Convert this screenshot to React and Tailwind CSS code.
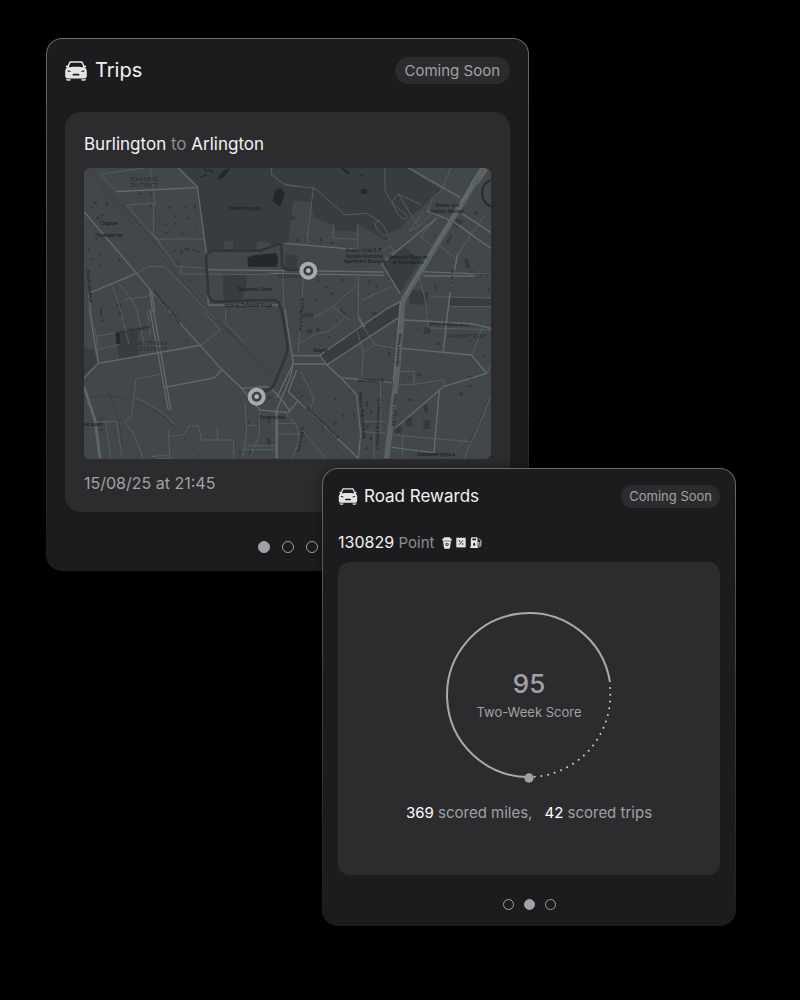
import { useState } from 'react';
import clsx from 'clsx';

// Car seen from the front
const CarIcon = ({ className }) => (
  <svg viewBox="0 0 66 61" className={className} fill="currentColor" aria-hidden="true">
    <path
      fillRule="evenodd"
      d="M18 1h30c4 0 6 2 7 5l3 8c3-1 6 0 6 2 0 3-3 4-4 4 4 3 6 7 6 11v15c0 5-3 7-7 7H7c-4 0-7-2-7-7V31c0-4 2-8 6-11-1 0-4-1-4-4 0-2 3-3 6-2l3-8c1-3 3-5 7-5Zm1 4c-2 0-3 1-4 3l-3 8c-1 2 0 3 2 3 13-2 25-2 38 0 2 0 3-1 2-3l-3-8c-1-2-2-3-4-3H19ZM8 28c-1 0-1 1-1 2 0 2 2 3 4 3h5c2 0 3-1 1-2-3-1-6-2-9-3Zm50 0c1 0 1 1 1 2 0 2-2 3-4 3h-5c-2 0-3-1-1-2 3-1 6-2 9-3ZM26 39c-2 0-2 1-3 2l-1 2c0 1 0 1 1 1h20c1 0 1 0 1-1l-1-2c-1-1-1-2-3-2H26Z"
    />
    <path d="M3 55c4 1 9 1 14 1 0 3-1 4-3 4H7c-3 0-4-2-4-5Zm60 0c-4 1-9 1-14 1 0 3 1 4 3 4h7c3 0 4-2 4-5Z" />
  </svg>
);

const CupIcon = () => (
  <svg viewBox="0 0 30 36" className="h-3 w-2.5" fill="currentColor" aria-hidden="true">
    <path d="M8 1h14c2 0 3 1 4 4h2c2 0 2 6 0 6H2C0 11 0 5 2 5h2c1-3 2-4 4-4Z" />
    <path fillRule="evenodd" d="M3 13h24l-3 19c0 2-2 3-4 3H10c-2 0-4-1-4-3L3 13Zm12 4a5 5 0 1 0 0 10 5 5 0 0 0 0-10Z" />
    <path d="M17 19c-4 0-5 3-4 6 4 0 5-3 4-6Z" />
  </svg>
);

const CouponIcon = () => (
  <svg viewBox="0 0 32 34" className="h-[11px] w-2.5" fill="currentColor" aria-hidden="true">
    <path d="M1 2c2-2 4-1 5 1 1-3 5-3 6 0 1-3 7-3 8 0 1-3 5-3 6 0 1-2 3-3 5-1v30c-2 2-4 1-5-1-1 3-5 3-6 0-1 3-7 3-8 0-1 3-5 3-6 0-1 2-3 3-5 1V2Z" />
    <path d="M10 24 22 10" stroke="#1c1c1e" strokeWidth="3" />
    <circle cx="11" cy="12" r="2.5" fill="#1c1c1e" />
    <circle cx="21" cy="22" r="2.5" fill="#1c1c1e" />
  </svg>
);

const FuelIcon = () => (
  <svg viewBox="0 0 36 34" className="h-[11px] w-3" fill="currentColor" aria-hidden="true">
    <path fillRule="evenodd" d="M7 1h11c3 0 5 2 5 5v24h2v4H0v-4h2V6c0-3 2-5 5-5Zm0 4v5h11V5H7Zm6 12c-2 2-4 4-4 6 0 5 7 5 7 0 0-2-1-4-3-6Z" />
    <path d="M23 17h4v9c0 4 6 4 6 0V11l-6-6" fill="none" stroke="currentColor" strokeWidth="3" />
  </svg>
);

// Streets, drawn in map units
const minorRoads = [
  'M53 18 178 0M53 21 96 71 208 65M198 0 214 106 128 111 223 221 278 296 366 300',
  'M208 106V201L223 213H363M208 201 230 225',
  'M158 316 193 296H243L398 456',
  'M290 301V318L560 320',
  'M603 51 693 61 783 141 848 136 888 161Q870 160 874 174 894 210 908 202 918 196 888 161',
  'M688 61 668 226M821 166V236M750 170 745 210 821 214',
  'M563 0V20L600 48 640 55',
  'M903 0V66L938 131Q950 158 966 152 974 138 950 128L923 101 943 78 1010 110',
  'M943 78 1003 176 1043 136M1033 126 1045 90 1073 66 1100 0',
  'M1003 176 975 190 1020 130M893 250 918 233 930 248 900 270M905 280 935 252',
  'M1203 141 1123 256 1098 376 1078 551',
  'M1058 151 1010 205 1050 240M1050 220 1120 275',
  'M823 321V456M818 351 748 416 690 450M923 356 833 396',
  'M748 416 800 460M640 530 700 495Q740 500 780 450',
  'M658 331 643 556M593 226 600 413 628 586',
  'M1000 311 1020 380 1030 440M1040 386 1221 390M1098 416H1221',
  'M1028 450 1035 480 1221 485',
  'M823 456 873 530 838 552 833 626M873 530 950 545',
  'M820 490 838 552M650 610 690 690 680 720',
  'M83 350 110 426 135 530M103 345 125 370 158 420 180 530',
  'M120 395 190 385 200 371M13 426 38 505 110 492',
  'M38 545 105 530M190 426 200 500M38 505 43 586',
  'M228 619 156 633 143 746 121 761 150 800 178 871',
  'M156 690C220 720 250 740 270 770',
  'M253 806 300 800 315 774H343L353 816H448L450 871M400 816V780M253 786 258 871H220',
  'M33 762 98 760 115 871M65 762 80 871M200 866 258 860',
  'M425 426V465L478 522M358 426 408 486 353 531',
  'M483 706 488 796 475 871M528 726 525 800 498 871M488 772H525M485 833H578M480 845H578',
  'M578 766H640M578 798H650',
  'M603 735Q650 770 645 820L625 871M650 780 725 871',
  'M833 760H905M833 791 905 796M870 795V871M890 645 888 795',
  'M928 801 1158 821M1150 810 1110 850M955 803V871',
  'M940 610H990V650H940M990 650 1075 635 1085 655',
  'M1163 561 1200 470M1208 616 1221 590',
  'M1221 680 1190 760 1140 871',
];

const mainRoads = [
  'M0 131 158 316 203 371 413 604 473 661 548 656Q575 665 618 731',
  'M13 376 158 316M13 376 25 480 43 586 3 626 0 631',
  'M283 0 340 56 366 248 373 411H593M96 71 338 59',
  'M366 305 618 308 898 312M560 316 900 322M1010 311 1221 319M1018 324H1221',
  'M603 226 838 246',
  'M973 0 1128 88M1028 128 1108 161 1221 241M1133 136 1221 194',
  'M1058 151 893 286 948 376',
  'M43 586 353 531M198 426 253 726M208 426 261 726M243 658 393 629 413 604',
  'M198 371 205 430M203 371 212 430',
  'M473 661 528 726 613 734 640 700M578 726 618 631 628 586',
  'M603 426 628 586 578 690M625 563H708M625 588H728',
  'M728 591 771 629 818 681 830 800 823 871M638 606 613 671 823 871',
  'M771 629 923 644M953 541 1163 561 1208 616 1078 656 933 781',
  'M1066 666 1050 854 923 838M963 456 1170 468 1221 481',
  'M823 446 843 478M708 561 728 591 940 451H960M708 561 903 426 948 401',
  'M1078 551 1088 456 1098 376 1120 260',
];

const buildings = [
  'M30 100h10v8h-10ZM60 108l8-6 8 8-8 6ZM38 145h8v10h-8ZM52 138h9v6h-9ZM20 115h6v6h-6Z',
  'M160 74h12v6h-12ZM196 74h8v8h-8ZM198 110h6v8h-6ZM252 115h8v6h-8ZM298 114h10v5h-10ZM330 110h5v12h-5Z',
  'M225 148h6v6h-6ZM270 142h7v9h-7ZM306 148h8v6h-8ZM240 168h8v5h-8ZM270 165h7v7h-7ZM241 192h12v5h-12ZM292 196h10v5h-10ZM332 180h6v5h-6Z',
  'M268 246h9v5h-9ZM288 250h8v8h-8ZM302 240h14v6h-14ZM325 242h12v6h-12ZM279 282h7v7h-7ZM335 248h12v5h-12Z',
  'M12 240h5v8h-5ZM45 258h6v7h-6ZM22 270h9v5h-9ZM102 270h7v8h-7ZM45 290h5v6h-5Z',
  'M98 406h14v10h-14ZM102 432h14v9h-14ZM48 418h6v24h-6ZM50 455h9v6h-9ZM115 455h9v6h-9ZM290 495h5v6h-5ZM305 515h8v6h-8Z',
  'M35 210h6v5h-6ZM636 212h8v9h-8ZM662 210h5v12h-5ZM682 214h8v6h-8ZM708 210h6v12h-6ZM738 222h10v6h-10Z',
  'M622 145h12v12h-12ZM700 335h6v7h-6ZM722 355h12v5h-12ZM770 333h10v6h-10ZM740 372h8v8h-8ZM690 392h10v5h-10ZM770 420h5v12h-5ZM665 434h22v14h-22Z',
  'M850 335h9v9h-9ZM875 352h7v9h-7ZM848 376h10v5h-10ZM912 326h8v8h-8ZM1050 350h8v14h-8ZM1140 274l12 -2 6 28h-12ZM1170 130h10v10h-10Z',
  'M1085 170l8 6-8 8-7-6ZM1100 200l6 4-14 22-6-4ZM1050 195l8 6-8 8ZM1160 308h10v8h-10ZM1210 358h9v12h-9Z',
  'M655 438h30v10h-30ZM670 484h14v12h-14ZM696 480h10v12h-10ZM733 504h8v8h-8ZM775 430h9v12h-9ZM864 432h14v9h-14Z',
  'M1020 478h20v20h-20ZM1000 478h5v8h-5ZM1060 522h10v8h-10ZM998 617h14v6h-14ZM958 628h6v6h-6ZM974 624h8v8h-8Z',
  'M976 690l12 5-6 6-12-5ZM1016 714l14-6 2 28h-8ZM965 750h20v24h-20ZM1018 757h20v26h-20ZM933 775h20v20h-20ZM930 730h8v14h-8Z',
  'M1150 625h14v10h-14ZM1128 670l12 8-8 6-8-7ZM1148 652h20v5h-20ZM1196 560h12v5h-12ZM1155 515h5v8h-5ZM912 552h8v10h-8Z',
  'M640 668h7v8h-7ZM650 680h9v7h-9ZM752 758l10 6-8 8-8-6ZM775 738h7v8h-7ZM845 700h8v18h-8ZM858 725h6v10h-6ZM845 770h9v10h-9ZM858 805h6v12h-6ZM845 835h7v10h-7ZM878 838h6v8h-6Z',
  'M492 756h5v12h-5ZM518 765h6v12h-6ZM550 685h12v8h-12ZM548 810h12v22h-12ZM552 750h5v16h-5ZM495 845h7v14h-7ZM465 848h5v10h-5Z',
  'M48 750h5v9h-5ZM45 783h12v6h-12ZM750 690h9v6h-9ZM795 660h7v9h-7ZM806 735h6v12h-6ZM912 540h6v6h-6Z',
];

const mapLabels = [
  { x: 181, y: 38, text: 'MARFINO', wide: true },
  { x: 181, y: 56, text: 'DISTRICT', wide: true },
  { x: 74, y: 170, text: 'Стадион' },
  { x: 75, y: 207, text: 'Перекрёсток' },
  { x: 483, y: 126, text: 'Ostankino park' },
  { x: 513, y: 369, text: 'Ostankino Tower' },
  { x: 493, y: 416, text: 'проезд Дубовой Рощи' },
  { x: 619, y: 329, text: 'OSTANK', wide: true },
  { x: 840, y: 253, text: 'Academician S. P.' },
  { x: 842, y: 269, text: 'Korolev Memorial' },
  { x: 842, y: 285, text: 'Apartment Museum' },
  { x: 1090, y: 118, text: 'Worker and' },
  { x: 1090, y: 134, text: 'Kolkhoz Woman' },
  { x: 972, y: 273, text: 'Memorial Museum' },
  { x: 972, y: 289, text: 'of Astronautics' },
  { x: 1196, y: 327, text: 'Cosmon' },
  { x: 709, y: 553, text: 'Magnit' },
  { x: 208, y: 532, text: 'BUTYRSKY', wide: true },
  { x: 208, y: 550, text: 'DISTRICT', wide: true },
  { x: 28, y: 774, text: 'ексашки' },
  { x: 565, y: 753, text: 'Pyaterochka' },
  { x: 861, y: 642, text: 'Goctinaya St' },
  { x: 1150, y: 509, text: 'ALEKSEEVSKY', wide: true },
  { x: 1094, y: 473, text: 'улица Кибальчича', angle: 3 },
  { x: 1056, y: 863, text: 'Академия труда и' },
  { x: 146, y: 490, text: 'улица Руставели', angle: -10 },
  { x: 245, y: 419, text: 'Огородный проезд', angle: 50 },
  { x: 712, y: 768, text: 'Murmanskiy Proyezd', angle: 43 },
  { x: 831, y: 742, text: 'Staraya Alekseevskaya', angle: 85 },
  { x: 886, y: 762, text: 'Novaya Maryinskaya St', angle: -88 },
  { x: 947, y: 546, text: 'проспект Мира', angle: -85 },
  { x: 934, y: 726, text: 'проспект Мира', angle: -85 },
  { x: 1108, y: 338, text: 'Yaroslav St', angle: -83 },
  { x: 655, y: 440, text: 'Argunovskaya St', angle: -86 },
  { x: 654, y: 815, text: 'Polkovaya St', angle: -80 },
  { x: 12, y: 355, text: 'Botanicheskaya', angle: 85 },
];

const Marker = ({ x, y }) => (
  <g transform={`translate(${x} ${y})`}>
    <circle r="21" fill="#3b3f41" stroke="#a9aaad" strokeWidth="12" />
    <circle r="7" fill="#b4b5b8" />
  </g>
);

const TripMap = () => (
  <svg
    viewBox="0 0 1221 873"
    role="img"
    aria-label="Route map"
    className="block w-full rounded-md bg-[#42484a]"
    fill="none"
    strokeLinejoin="round"
  >
    {/* Parks and water */}
    <g fill="#373c3e">
      <path d="M283 0 340 56 366 248 420 246V220H448V246H515L520 222H550L565 230 613 225 628 100H678L690 150 750 170 755 190H820V165L900 215C920 220 895 195 930 188 970 180 950 160 1000 130L1073 66 973 0Z" />
      <path d="M418 318H488V345L475 395H418Z" />
      <path d="M708 561 903 426 960 401V451H940L728 591Z" />
      <path d="M893 286 963 240 1010 275 963 350 948 376ZM1098 388 1221 392V416H1098ZM978 362 1034 375 1025 410 975 408Z" />
      <path d="M95 500 160 488 166 564 106 572ZM0 540 28 545 43 586 0 630ZM603 260H640V306H603Z" />
      <path d="M1108 145 1138 160 1120 180 1100 165Z" />
    </g>
    <g fill="#22282c">
      <path d="M490 268 510 262 575 255 583 270 578 296 492 296Z" />
      <path d="M575 65 590 60 603 75 590 115 572 105 565 98ZM400 35Q410 5 440 0L430 15Q415 38 400 35ZM770 0H780L798 14 792 20Z" />
      <ellipse cx="840" cy="70" rx="10" ry="8" />
      <path d="M96 496H107V528H97Z" />
    </g>
    <path d="M360 0 370 10M375 5 385 12M830 22H838M368 20 350 28" stroke="#22282c" strokeWidth="4" />

    {/* Railways */}
    <path
      d="M0 0 398 456M358 426 618 656 783 871M20 8 405 440M375 426 603 670M0 691C140 665 250 720 348 871M20 620C80 660 110 720 115 871M1221 672 1155 830"
      stroke="#353b3d"
      strokeWidth="2"
    />

    {/* Streets */}
    <g fill="#343a3c">
      {buildings.map((d) => (
        <path key={d} d={d} />
      ))}
    </g>
    <g stroke="#565e5f" strokeWidth="3">
      {minorRoads.map((d) => (
        <path key={d} d={d} />
      ))}
    </g>
    <g stroke="#626b6a" strokeWidth="4">
      {mainRoads.map((d) => (
        <path key={d} d={d} />
      ))}
    </g>
    <path d="M0 656 33 756 48 871M578 726V871" stroke="#5e6766" strokeWidth="8" />
    <path d="M1203 0 1173 41 963 386Q950 410 953 456L938 626 908 871" stroke="#59625f" strokeWidth="17" />
    <path d="M1190 0 1160 50M1210 5 1180 50M1165 52 965 378M950 400 928 640" stroke="#6b7573" strokeWidth="3" />
    <path d="M1221 36C1185 50 1185 100 1221 116" stroke="#25292b" strokeWidth="6" />

    <g
      fill="#171b1e"
      className="font-['Noto_Sans','DejaVu_Sans',sans-serif] font-medium"
      textAnchor="middle"
    >
      {mapLabels.map(({ x, y, text, wide, angle = 0 }) => (
        <text
          key={`${x}-${y}`}
          transform={`translate(${x} ${y}) rotate(${angle})`}
          fontSize={wide ? 15 : 13}
          className={clsx(wide && 'tracking-[2px]')}
          fillOpacity={wide ? 0.7 : 1}
        >
          {text}
        </text>
      ))}
    </g>

    {/* Trip route */}
    <path
      d="M648 306H615C600 306 593 296 593 280V238C593 228 585 226 575 230L528 248H392C372 248 366 258 366 276L373 376C375 396 384 401 400 401L560 396C582 396 588 402 589 422L593 426 610 530C611 550 608 560 602 572L570 650C560 664 555 666 533 671"
      stroke="#323536"
      strokeWidth="8"
    />
    <Marker x={673} y={308} />
    <Marker x={518} y={686} />
  </svg>
);

const Card = ({ className, children }) => (
  <section className={clsx('rounded-2xl bg-linear-to-b from-[#6b6b6d] via-[#3c3c3e] to-[#1c1c1e] p-px', className)}>
    {children}
  </section>
);

const Pagination = ({ inicio, label, small }) => {
  const [activo, setActivo] = useState(inicio);

  return (
    <nav aria-label={label} className={clsx('flex justify-center', small ? 'gap-2.5' : 'gap-3')}>
      {[0, 1, 2].map((i) => (
        <button
          key={i}
          type="button"
          aria-label={`${i + 1}`}
          aria-current={activo === i}
          onClick={() => setActivo(i)}
          className={clsx(
            'rounded-full border border-[#a1a1a6]',
            small ? 'size-[11px]' : 'size-3',
            activo === i && 'bg-[#a1a1a6]'
          )}
        />
      ))}
    </nav>
  );
};

const ScoreRing = () => (
  <div className="relative mx-auto w-[190px]">
    <svg viewBox="0 0 190 190" className="block w-full" fill="none" aria-hidden="true">
      <path d="M95 176A82 82 0 1 1 176 81" stroke="#a9a9ac" strokeWidth="2" />
      <path d="M176 87A82 82 0 0 1 98 176" stroke="#d0d0d2" strokeWidth="2" strokeLinecap="round" strokeDasharray="0 6.8" />
      <circle cx="95" cy="177" r="4.7" fill="#a1a1a6" />
    </svg>
    <div className="absolute inset-0 flex flex-col items-center justify-center text-[#a1a1a6]">
      <p className="text-[26px] leading-8 font-medium">95</p>
      <p className="text-[13px] leading-6">Two-Week Score</p>
    </div>
  </div>
);

const App = () => (
  <main className="min-h-screen bg-black pt-[38px] font-[Inter,sans-serif] text-[#f2f2f4]">
    <div className="mx-auto flex max-w-[800px] flex-col pr-16 pl-[46px]">
      <Card className="w-[70%]">
        <div className="rounded-[15px] bg-[#1c1c1e] px-[18px] pt-[18px] pb-[17px]">
          <header className="flex items-center justify-between">
            <h2 className="flex items-center gap-2 text-xl leading-[27px]">
              <CarIcon className="h-5 w-[22px] text-[#e4e4e6]" />
              Trips
            </h2>
            <span className="rounded-full bg-[#2c2c2e] px-2.5 text-[15px] leading-[27px] text-[#a1a1a6]">
              Coming Soon
            </span>
          </header>

          <div className="mt-7 rounded-2xl bg-[#2c2c2e] px-[19px] pt-5 pb-[17px]">
            <h3 className="mb-3 text-[17px] leading-6">
              Burlington <span className="text-[#8e8e93]">to</span> Arlington
            </h3>
            <TripMap />
            <p className="mt-3 text-base leading-6 text-[#a1a1a6]">15/08/25 at 21:45</p>
          </div>

          <div className="mt-[29px]">
            <Pagination inicio={0} label="Trips" />
          </div>
        </div>
      </Card>

      {/* Overlaps the lower corner of the trips card */}
      <Card className="relative -mt-[103px] w-3/5 self-end shadow-[0_0_12px_rgba(0,0,0,0.35)]">
        <div className="rounded-[15px] bg-[#1c1c1e] p-[15px]">
          <header className="flex items-center justify-between">
            <h2 className="flex items-center gap-1.5 text-[17px] leading-6">
              <CarIcon className="h-[17px] w-5 text-[#e4e4e6]" />
              Road Rewards
            </h2>
            <span className="rounded-full bg-[#2c2c2e] px-2 text-[13px] leading-[23px] text-[#a1a1a6]">
              Coming Soon
            </span>
          </header>

          <div className="mt-[22px] flex items-center text-base leading-6">
            <p>
              130829 <span className="text-[15px] text-[#8e8e93]">Point</span>
            </p>
            <div className="ml-2 flex items-center gap-1 text-[#e4e4e6]">
              <CupIcon />
              <CouponIcon />
              <FuelIcon />
            </div>
          </div>

          <div className="mt-[7px] rounded-xl bg-[#2c2c2e] pt-[39px] pb-[50px]">
            <ScoreRing />
            <p className="mt-2.5 flex justify-center gap-3 text-[15px] leading-6 text-[#a1a1a6]">
              <span>
                <span className="text-white">369</span> scored miles,
              </span>
              <span>
                <span className="text-white">42</span> scored trips
              </span>
            </p>
          </div>

          <div className="mt-6">
            <Pagination inicio={1} label="Road Rewards" small />
          </div>
        </div>
      </Card>
    </div>
  </main>
);

export default App;
